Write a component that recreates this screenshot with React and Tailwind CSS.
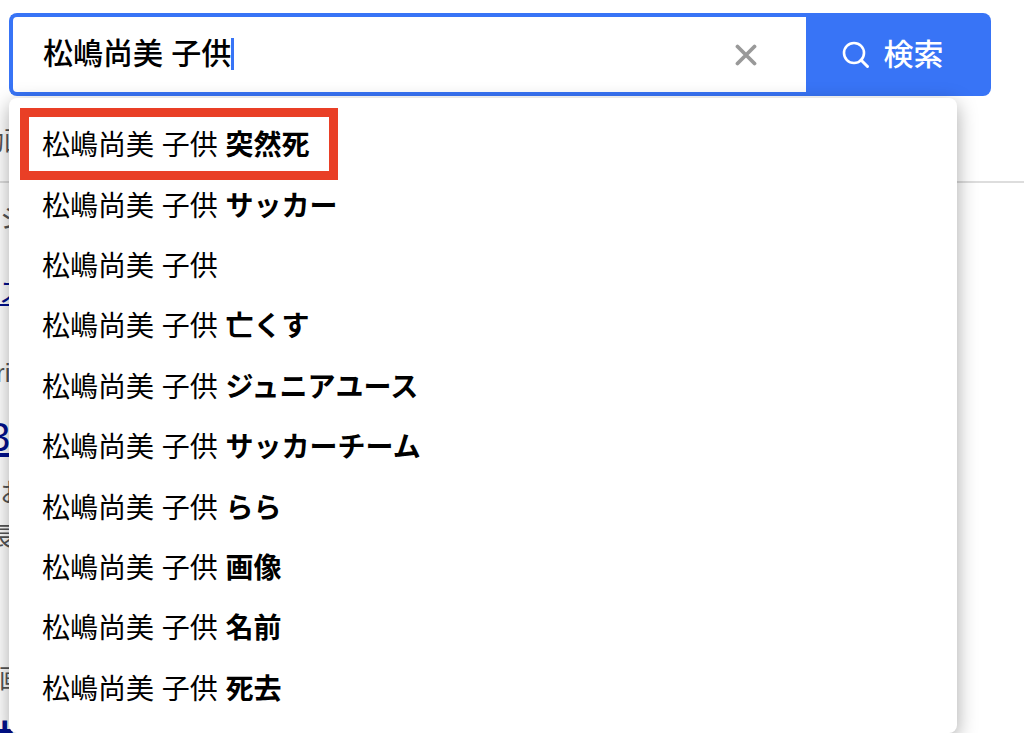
import { useState } from "react";

const KEYWORD = "松嶋尚美 子供";

const SUGGESTIONS = ["突然死", "サッカー", "", "亡くす", "ジュニアユース", "サッカーチーム", "らら", "画像", "名前", "死去"];

const SearchIcon = () => (
    <svg width="28" height="28" viewBox="0 0 28 28" fill="none" stroke="currentColor" strokeWidth="2.6" aria-hidden="true">
        <circle cx="12" cy="12" r="10" />
        <path d="M19 19l6.5 6.5" strokeWidth="3" strokeLinecap="round" />
    </svg>
);

const ClearIcon = () => (
    <svg width="22" height="22" viewBox="0 0 22 22" fill="none" stroke="currentColor" strokeWidth="3.8" strokeLinecap="round" aria-hidden="true">
        <path d="M2.5 2.5l17 17M19.5 2.5l-17 17" />
    </svg>
);

const SearchForm = ({ value, onChange, onClear }) => (
    <form role="search" className="flex h-[83px]" onSubmit={(e) => e.preventDefault()}>
        <div className="flex flex-1 min-w-0 items-center rounded-l-lg border-4 border-r-0 border-[#3874f6] bg-white pl-[30px]">
            {/* caret follows the typed keyword */}
            <div className="relative mb-[2px] flex-1 min-w-0">
                <input
                    aria-label="検索キーワード"
                    value={value}
                    onChange={(e) => onChange(e.target.value)}
                    className="block w-full h-10 bg-transparent text-[30px] leading-10 font-medium text-black caret-transparent outline-none"
                />
                <div className="pointer-events-none absolute inset-y-0 left-0 flex items-center" aria-hidden="true">
                    <span className="invisible whitespace-pre text-[30px] font-medium">{value}</span>
                    <span className="h-8 w-[3px] bg-[#3874f6]" />
                </div>
            </div>
            <button type="button" aria-label="クリア" onClick={onClear} className="mr-[49px] text-[#999]">
                <ClearIcon />
            </button>
        </div>
        <button
            type="submit"
            className="flex w-[185px] items-center justify-center gap-[14px] rounded-r-lg bg-[#3874f6] pr-3 text-[30px] font-medium text-white"
        >
            <SearchIcon />
            検索
        </button>
    </form>
);

const SuggestList = () => (
    <ul className="flex h-[604px] flex-col">
        {SUGGESTIONS.map((word, i) => (
            <li key={word} className="flex min-h-0 flex-1 items-center">
                <a
                    href="#"
                    className={
                        i === 0
                            ? "-mt-1 ml-[11px] flex h-[72px] items-center border-[9px] border-[#e93f26] pt-1 pl-[13px] pr-[19px]"
                            : "flex items-center pl-[33px]"
                    }
                >
                    <span className="whitespace-pre">
                        {KEYWORD} <b className="font-bold">{word}</b>
                    </span>
                </a>
            </li>
        ))}
    </ul>
);

const PageBehind = () => (
    <div className="text-[26px] leading-10 text-[#555]">
        <nav className="flex h-[87px] items-center border-b-2 border-[#ddd] pt-1 whitespace-nowrap">
            <span className="-ml-[22px]">動画</span>
        </nav>
        <p className="mt-4">シ</p>
        <p className="mt-[34px] -ml-px text-[#00108c]">
            <a href="#" className="underline">
                ス
            </a>
        </p>
        <p className="mt-10 -ml-1 font-medium">ri</p>
        <p className="mt-6 -ml-3 text-[40px] text-[#00108c]">
            <a href="#" className="underline">
                3
            </a>
        </p>
        <p className="mt-4">お</p>
        <p className="mt-1 -ml-3">長</p>
        <p className="mt-[102px] -ml-px">画</p>
        <p className="mt-5 -ml-6 text-[38px] font-bold text-[#00108c]">
            <a href="#" className="underline">
                世
            </a>
        </p>
    </div>
);

export default function App() {
    const [value, setValue] = useState(KEYWORD);

    return (
        <div
            lang="ja"
            className="h-screen overflow-hidden bg-white pt-[13px] font-['Liberation_Sans','Noto_Sans_CJK_JP',sans-serif]"
        >
            <div className="relative ml-[9px] mr-[33px]">
                <SearchForm value={value} onChange={setValue} onClear={() => setValue("")} />
                <div className="absolute top-[85px] left-0 right-[34px] rounded-lg bg-white pt-[18px] pb-[13px] text-[28px] leading-10 text-black shadow-[0_6px_20px_rgba(0,0,0,0.35)]">
                    <SuggestList />
                </div>
            </div>
            <PageBehind />
        </div>
    );
}
